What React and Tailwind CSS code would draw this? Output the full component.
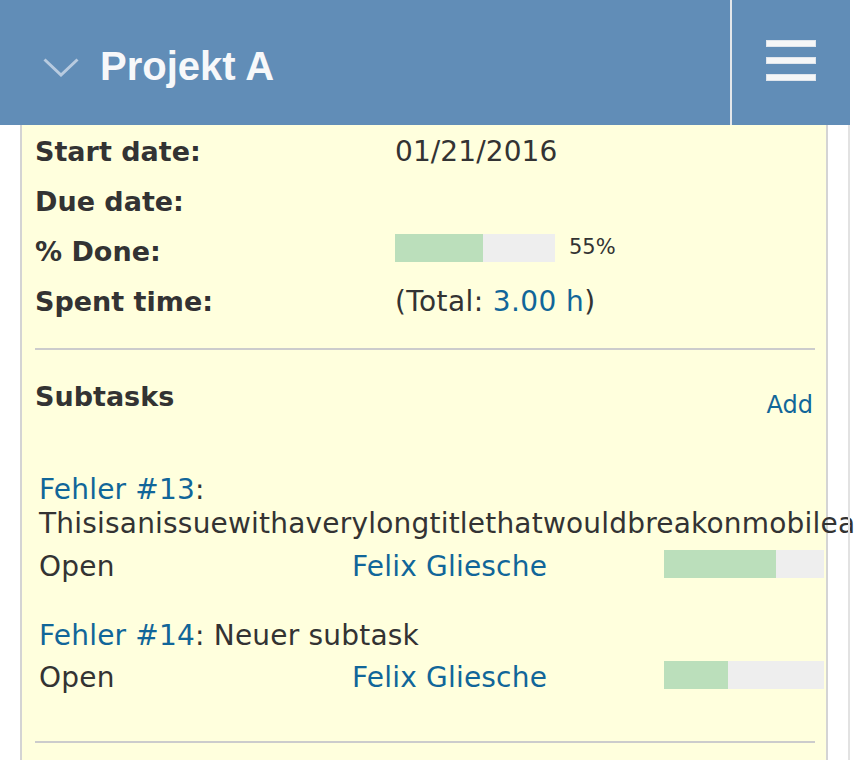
export default function App() {
  const info = [
    { label: 'Start date:', value: '01/21/2016' },
    { label: 'Due date:', value: '' },
    { label: '% Done:', progress: 55 },
    { label: 'Spent time:', spent: '3.00 h' },
  ];

  const subtasks = [
    {
      id: 13,
      title: 'Thisisanissuewithaverylongtitlethatwouldbreakonmobileasitisreallylong',
      status: 'Open',
      assignee: 'Felix Gliesche',
      done: 70,
    },
    { id: 14, title: 'Neuer subtask', status: 'Open', assignee: 'Felix Gliesche', done: 40 },
  ];

  return (
    <div className="relative min-h-[760px] w-full overflow-hidden bg-white text-[#333333] font-['DejaVu_Sans',Verdana,sans-serif]">
      {/* Header */}
      <div className="flex h-[125px] w-[850px] bg-[#618db7]">
        <div className="flex flex-1 items-start pl-[43px] pt-[46px]">
          <svg className="mt-[12px] shrink-0" width="36" height="19" viewBox="0 0 36 19" fill="none">
            <polyline points="1.5,1.5 18,17 34.5,1.5" stroke="#b8cbe0" strokeWidth="3" />
          </svg>
          <h1 className="ml-[21px] text-[40px] leading-[40px] font-bold text-[#f7f8fa] font-['Liberation_Sans',Arial,sans-serif]">
            Projekt A
          </h1>
        </div>
        <div className="w-[2px] bg-[#e4e7ea]" />
        <div className="flex w-[118px] flex-col items-center gap-[10px] pt-[40px]">
          <span className="block h-[7px] w-[50px] bg-[#f5f6f7] border border-[#dfe5ec]" />
          <span className="block h-[7px] w-[50px] bg-[#f5f6f7] border border-[#dfe5ec]" />
          <span className="block h-[7px] w-[50px] bg-[#f5f6f7] border border-[#dfe5ec]" />
        </div>
      </div>

      {/* Body */}
      <div className="flex">
        <div className="w-[20px] shrink-0" />
        <div className="min-h-[635px] w-[808px] shrink-0 border-x-2 border-[#d4d4d4] bg-[#ffffdd] pl-[13px] pr-[11px] pt-[2px]">
          {/* Attributes */}
          {info.map((row) => (
            <div key={row.label} className="grid h-[50px] grid-cols-[360px_1fr] leading-[50px]">
              <div className="text-[27px] font-bold">{row.label}</div>
              {row.progress !== undefined ? (
                <div className="flex items-start">
                  <div className="mt-[7px] flex h-[28px] w-[160px] bg-[#eeeeee]">
                    <div className="h-full bg-[#bbdfbb]" style={{ width: `${row.progress}%` }} />
                  </div>
                  <span className="ml-[14px] mt-[6px] text-[21px] leading-[28px]">{row.progress}%</span>
                </div>
              ) : row.spent ? (
                <div className="text-[28px] tracking-[0.4px]">
                  (Total: <a className="text-[#116699]">{row.spent}</a>)
                </div>
              ) : (
                <div className="text-[28px] tracking-[0.1px]">{row.value}</div>
              )}
            </div>
          ))}

          <div className="mt-[21px] h-[2px] bg-[#cccccc]" />

          {/* Subtasks */}
          <div className="mt-[30px] flex items-start justify-between">
            <h3 className="text-[27px] leading-[34px] font-bold">Subtasks</h3>
            <a className="mr-[2px] mt-[8px] text-[24px] leading-[34px] text-[#116699]">Add</a>
          </div>

          <div className="mt-[51px] flex flex-col gap-[35px] pl-[4px] text-[28px] leading-[34px] tracking-[0.2px]">
            {subtasks.map((task, i) => (
              <div key={task.id}>
                <div>
                  <a className="text-[#116699]">Fehler #{task.id}</a>: {task.title}
                </div>
                <div className={`${i === 0 ? 'mt-[9px]' : 'mt-[8px]'} flex h-[34px] items-start`}>
                  <span className="w-[313px] shrink-0">{task.status}</span>
                  <a className="w-[312px] shrink-0 text-[#116699]">{task.assignee}</a>
                  <div className="flex h-[28px] w-[160px] shrink-0 bg-[#eeeeee]">
                    <div className="h-full bg-[#bbdfbb]" style={{ width: `${task.done}%` }} />
                  </div>
                </div>
              </div>
            ))}
          </div>

          <div className="mt-[46px] h-[2px] bg-[#cccccc]" />
        </div>
        <div className="w-[20px] shrink-0" />
        <div className="min-h-[635px] w-[2px] shrink-0 bg-[#e2e2e2]" />
      </div>
    </div>
  );
}
